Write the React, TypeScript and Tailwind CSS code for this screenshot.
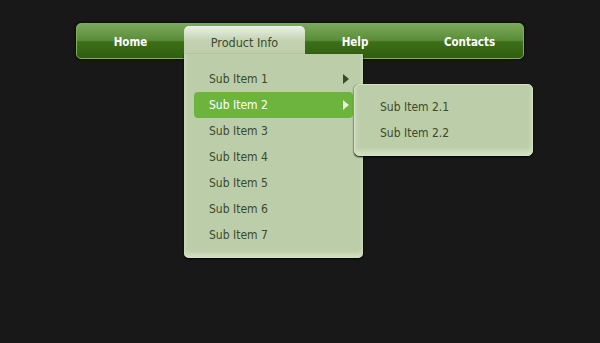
import { ReactNode } from "react";

const subItems = ["Sub Item 1", "Sub Item 2", "Sub Item 3", "Sub Item 4", "Sub Item 5", "Sub Item 6", "Sub Item 7"];
const nestedItems = ["Sub Item 2.1", "Sub Item 2.2"];

function Arrow({ light }: { light?: boolean }) {
  return (
    <svg width="6" height="10" viewBox="0 0 6 10" className="absolute right-[4px] top-[8px]">
      <path d="M0 0 L6 5 L0 10 Z" fill={light ? "#e6f2da" : "#3b4a2c"} />
    </svg>
  );
}

function NavCell({ width, children }: { width: string; children: ReactNode }) {
  return <div className={`${width} flex h-full items-center justify-center pt-[3px] text-[11.5px] font-bold text-white`}>{children}</div>;
}

export default function App() {
  return (
    <div className="h-[343px] w-[600px] bg-[#181818] pt-[23px] font-['DejaVu_Sans_Condensed','DejaVu_Sans',sans-serif]">
      <nav className="relative mx-auto flex h-[36px] w-[448px] rounded-[5px] border border-[#7fae5c] bg-[linear-gradient(#7aa85a,#5a8d38_48%,#3d7019_52%,#2f5e0f)] shadow-[0_0_3px_#000]">
        <NavCell width="w-[107px]">Home</NavCell>
        <div className="relative w-[121px]">
          <div className="mt-[2px] flex h-[32px] items-start justify-center rounded-t-[5px] bg-[linear-gradient(#edf1e8,#c3d3b2_45%,#bccda9)] pt-[8px] text-[12.5px] text-[#3a4a30]">
            Product Info
          </div>
          {/* dropdown */}
          <div className="absolute left-0 top-[30px] w-[179px] rounded-b-[5px] bg-[#bccda9] px-[10px] pb-[10px] pt-[12px] shadow-[inset_0_-4px_5px_#d4e2c4,0_1px_2px_#000]">
            {subItems.map((item, i) => (
              <div
                key={item}
                className={`relative flex h-[26px] items-center rounded-[4px] pl-[15px] text-[12px] ${
                  i === 1 ? "bg-[#6db43f] text-white" : "text-[#3b4a2c]"
                }`}
              >
                {item}
                {i < 2 && <Arrow light={i === 1} />}
                {i === 1 && (
                  <div className="absolute left-[160px] top-[-8px] w-[179px] rounded-[5px] border border-[#d2e0c4] bg-[#bccda9] px-[10px] pb-[9px] pt-[9px] shadow-[inset_0_-4px_5px_#d4e2c4,0_1px_2px_#000]">
                    {nestedItems.map((n) => (
                      <div key={n} className="flex h-[26px] items-center pl-[15px] text-[12px] text-[#3b4a2c]">
                        {n}
                      </div>
                    ))}
                  </div>
                )}
              </div>
            ))}
          </div>
        </div>
        <NavCell width="w-[100px]">Help</NavCell>
        <div className="flex-1 pl-[11px]">
          <NavCell width="w-full">Contacts</NavCell>
        </div>
      </nav>
    </div>
  );
}
